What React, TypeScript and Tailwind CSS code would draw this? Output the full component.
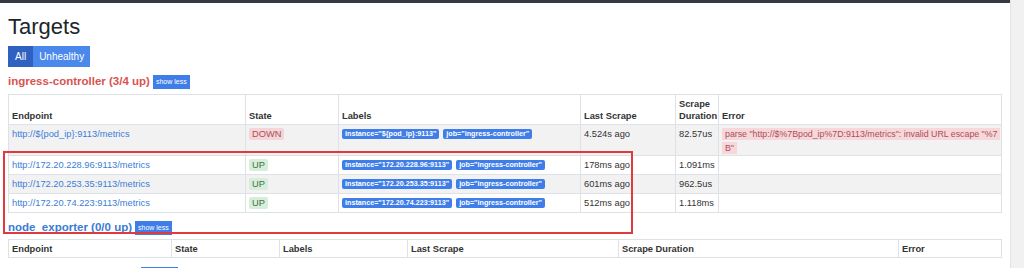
import React from 'react';

interface Target {
  endpoint: string;
  state: 'UP' | 'DOWN';
  labels: string[];
  lastScrape: string;
  duration: string;
  error?: string;
}

const ingressTargets: Target[] = [
  {
    endpoint: 'http://${pod_ip}:9113/metrics',
    state: 'DOWN',
    labels: ['instance="${pod_ip}:9113"', 'job="ingress-controller"'],
    lastScrape: '4.524s ago',
    duration: '82.57us',
    error: 'parse "http://$%7Bpod_ip%7D:9113/metrics": invalid URL escape "%7B"',
  },
  {
    endpoint: 'http://172.20.228.96:9113/metrics',
    state: 'UP',
    labels: ['instance="172.20.228.96:9113"', 'job="ingress-controller"'],
    lastScrape: '178ms ago',
    duration: '1.091ms',
  },
  {
    endpoint: 'http://172.20.253.35:9113/metrics',
    state: 'UP',
    labels: ['instance="172.20.253.35:9113"', 'job="ingress-controller"'],
    lastScrape: '601ms ago',
    duration: '962.5us',
  },
  {
    endpoint: 'http://172.20.74.223:9113/metrics',
    state: 'UP',
    labels: ['instance="172.20.74.223:9113"', 'job="ingress-controller"'],
    lastScrape: '512ms ago',
    duration: '1.118ms',
  },
];

function ShowLess() {
  return (
    <button className="ml-[3px] h-[14px] px-[3px] bg-[#3f7ee8] text-white text-[7px] leading-[14px]">
      show less
    </button>
  );
}

function GroupTitle({ name, up, total, healthy }: { name: string; up: number; total: number; healthy: boolean }) {
  return (
    <div className="flex items-center h-[15px]">
      <span className={`text-[11.5px] font-bold leading-[15px] ${healthy ? 'text-[#3a7bd5]' : 'text-[#d9534f]'}`}>
        {name} ({up}/{total} up)
      </span>
      <ShowLess />
    </div>
  );
}

export default function App() {
  const th = 'border border-[#dee2e6] px-[3px] py-[2px] text-left align-bottom font-bold text-[9.3px] leading-[12px] text-[#333]';
  const td = 'border border-[#dee2e6] px-[3px] align-top text-[9.3px] text-[#333]';

  return (
    <div className="flex w-[1024px] h-[268px] overflow-hidden bg-white" style={{ fontFamily: '"Liberation Sans", Arial, sans-serif' }}>
      <div className="relative flex-1 min-w-0">
        <div className="h-[3px] bg-[#343a40]" />
        <div className="px-[8px]">
          <h1 className="text-[22px] leading-[28px] mt-[10px] text-[#212529]">Targets</h1>

          <div className="flex mt-[5px] h-[21px]">
            <button className="px-[7px] bg-[#2f62c0] text-white text-[10px]">All</button>
            <button className="px-[6px] bg-[#4a88ec] text-white text-[10px]">Unhealthy</button>
          </div>

          <div className="mt-[7px]">
            <GroupTitle name="ingress-controller" up={3} total={4} healthy={false} />
          </div>

          <table className="mt-[5px] w-[993px] table-fixed border-collapse">
            <colgroup>
              <col className="w-[237px]" />
              <col className="w-[93px]" />
              <col className="w-[242px]" />
              <col className="w-[95px]" />
              <col className="w-[43px]" />
              <col className="w-[283px]" />
            </colgroup>
            <thead>
              <tr className="h-[30px]">
                <th className={th}>Endpoint</th>
                <th className={th}>State</th>
                <th className={th}>Labels</th>
                <th className={th}>Last Scrape</th>
                <th className={th}>Scrape Duration</th>
                <th className={th}>Error</th>
              </tr>
            </thead>
            <tbody>
              {ingressTargets.map((t, i) => (
                <tr key={t.endpoint} className={`${i % 2 === 0 ? 'bg-[#f2f2f2]' : 'bg-white'} ${t.error ? 'h-[31px]' : 'h-[19px]'}`}>
                  <td className={`${td} pt-[3px] leading-[13px]`}>
                    <a className="text-[#3b7dd8]">{t.endpoint}</a>
                  </td>
                  <td className={`${td} pt-[3px] leading-[13px]`}>
                    <span
                      className={`inline-block px-[3px] rounded-[2px] text-[9.3px] leading-[12px] ${
                        t.state === 'UP' ? 'bg-[#d8eedb] text-[#3e6e46]' : 'bg-[#f5d5d8] text-[#a8505a]'
                      }`}
                    >
                      {t.state}
                    </span>
                  </td>
                  <td className={`${td} pt-[4px]`}>
                    <div className="flex gap-[4px]">
                      {t.labels.map((l) => (
                        <span key={l} className="px-[3px] rounded-[2px] bg-[#3f7ee8] text-white font-bold text-[7.2px] leading-[10px] whitespace-nowrap">
                          {l}
                        </span>
                      ))}
                    </div>
                  </td>
                  <td className={`${td} pt-[3px] leading-[13px]`}>{t.lastScrape}</td>
                  <td className={`${td} pt-[3px] leading-[13px]`}>{t.duration}</td>
                  <td className={`${td} pt-[2px] pb-0 leading-[14px]`}>
                    {t.error && (
                      <span className="bg-[#f7d7da] text-[#a8505a] text-[8.8px] px-[3px] py-[1px] break-all [box-decoration-break:clone]">
                        {t.error}
                      </span>
                    )}
                  </td>
                </tr>
              ))}
            </tbody>
          </table>

          <div className="mt-[7px]">
            <GroupTitle name="node_exporter" up={0} total={0} healthy={true} />
          </div>

          <table className="mt-[4px] w-[993px] table-fixed border-collapse">
            <colgroup>
              <col className="w-[163px]" />
              <col className="w-[108px]" />
              <col className="w-[128px]" />
              <col className="w-[211px]" />
              <col className="w-[280px]" />
              <col className="w-[103px]" />
            </colgroup>
            <thead>
              <tr className="h-[18px]">
                <th className={`${th} align-middle py-[1px]`}>Endpoint</th>
                <th className={`${th} align-middle py-[1px]`}>State</th>
                <th className={`${th} align-middle py-[1px]`}>Labels</th>
                <th className={`${th} align-middle py-[1px]`}>Last Scrape</th>
                <th className={`${th} align-middle py-[1px]`}>Scrape Duration</th>
                <th className={`${th} align-middle py-[1px]`}>Error</th>
              </tr>
            </thead>
          </table>

          <div className="mt-[8px]">
            <GroupTitle name="mysql_exporter" up={0} total={0} healthy={true} />
          </div>
        </div>

        {/* annotation box */}
        <div className="absolute left-[3px] top-[151px] w-[630px] h-[83px] border-2 border-[#e0393e] pointer-events-none" />
      </div>
      <div className="w-[14px] bg-[#f1f1f1] border-l border-[#e4e4e4]" />
    </div>
  );
}
